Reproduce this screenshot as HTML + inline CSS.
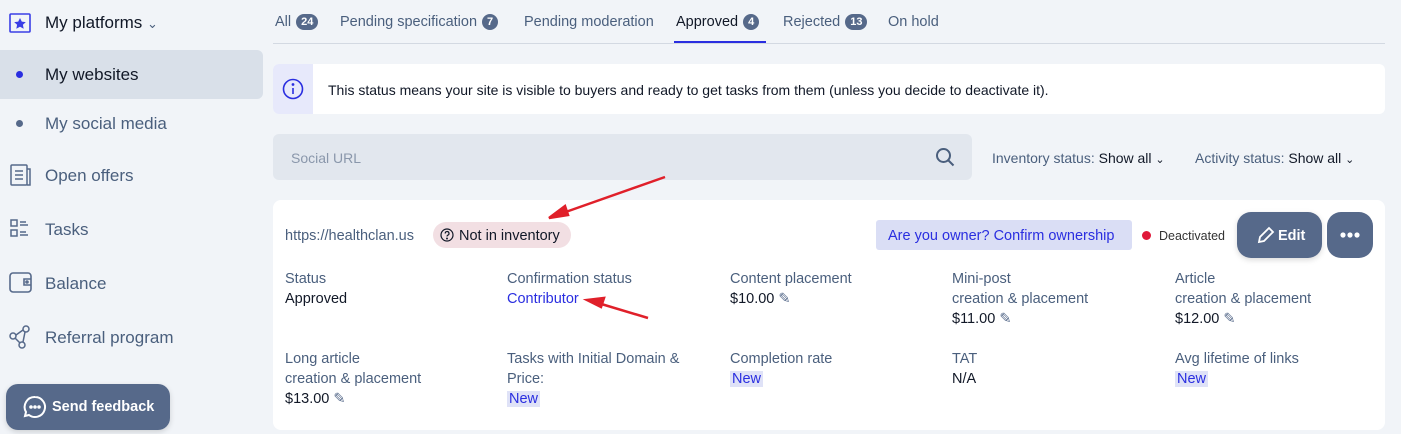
<!DOCTYPE html><html><head><style>
body{margin:0;width:1401px;height:434px;background:#f1f4f8;font-family:"Liberation Sans",sans-serif;position:relative;overflow:hidden;color:#111827}
.a{position:absolute;white-space:nowrap}
.nav{font-size:17px;color:#4a5f7d}
.tab{font-size:14.5px;color:#4a5f7d;top:13px}
.b{display:inline-block;background:#56698a;color:#fff;border-radius:10px;font-size:11px;font-weight:bold;padding:2px 5px;margin-left:5px;vertical-align:1px}
.l{font-size:14.5px;color:#4a5f7d;line-height:20px}
.v{font-size:14.5px;color:#111827;line-height:20px}
.new{background:#dfe2f7;color:#2a2ee0;padding:0 2px}
</style></head><body>
<svg class="a" style="left:9px;top:13px" width="22" height="20" viewBox="0 0 22 20"><rect x="1" y="1" width="20" height="18" rx="1" fill="none" stroke="#3a3ee6" stroke-width="1.6"/><path d="M11 5l1.8 3.6 4 .5-2.9 2.7.8 3.9L11 13.8 7.3 15.7l.8-3.9-2.9-2.7 4-.5z" fill="#3a3ee6"/></svg>
<div class="a" style="left:45px;top:13px;font-size:17px;color:#111827">My platforms <span style="font-size:13px;color:#4a5f7d">&#8964;</span></div>
<div class="a" style="left:0;top:50px;width:263px;height:49px;background:#d9e0e9;border-radius:0 6px 6px 0"></div>
<div class="a" style="left:16px;top:71px;width:7px;height:7px;border-radius:50%;background:#2a2ee0"></div>
<div class="a nav" style="left:45px;top:65px;color:#111827">My websites</div>
<div class="a" style="left:16px;top:120px;width:7px;height:7px;border-radius:50%;background:#56698a"></div>
<div class="a nav" style="left:45px;top:114px">My social media</div>
<svg class="a" style="left:10px;top:164px" width="22" height="22" fill="none" stroke="#56698a" stroke-width="1.5"><rect x="1" y="1" width="16" height="20" rx="1"/><path d="M17 5h3v16h-3M5 7h8M5 11h8M5 15h8"/></svg>
<div class="a nav" style="left:45px;top:166px">Open offers</div>
<svg class="a" style="left:10px;top:219px" width="22" height="20" fill="none" stroke="#56698a" stroke-width="1.5"><rect x="1" y="1" width="6" height="6"/><rect x="1" y="11" width="6" height="6"/><path d="M10 3h6M10 6h8M10 13h6M10 16h8"/></svg>
<div class="a nav" style="left:45px;top:220px">Tasks</div>
<svg class="a" style="left:9px;top:272px" width="24" height="22" fill="none" stroke="#56698a" stroke-width="1.6"><rect x="1" y="1" width="21" height="19" rx="3"/><path d="M22 7h-7v6h7"/><circle cx="18" cy="10" r="1"/></svg>
<div class="a nav" style="left:45px;top:274px">Balance</div>
<svg class="a" style="left:9px;top:325px" width="22" height="24" fill="none" stroke="#56698a" stroke-width="1.5"><circle cx="17" cy="4" r="3"/><circle cx="4" cy="11" r="3"/><circle cx="13" cy="20" r="3"/><path d="M7 10l7-5M6 13l5 5M16 7l-2 10"/></svg>
<div class="a nav" style="left:45px;top:328px">Referral program</div>
<div class="a" style="left:6px;top:384px;width:164px;height:46px;background:#56698a;border-radius:12px;box-shadow:0 2px 6px rgba(0,0,0,.15)"></div>
<svg class="a" style="left:23px;top:395px" width="24" height="24" fill="none" stroke="#fff" stroke-width="2"><path d="M12 2a10 10 0 1 1-6 18l-4 1 1-4A10 10 0 0 1 12 2z"/><circle cx="8" cy="12" r=".8" fill="#fff"/><circle cx="12" cy="12" r=".8" fill="#fff"/><circle cx="16" cy="12" r=".8" fill="#fff"/></svg>
<div class="a" style="left:52px;top:399px;font-size:14.5px;color:#fff;font-weight:bold">Send feedback</div>
<div class="a tab" style="left:275px;top:14px">All<span class="b">24</span></div>
<div class="a tab" style="left:340px;top:14px">Pending specification<span class="b">7</span></div>
<div class="a tab" style="left:524px;top:14px">Pending moderation</div>
<div class="a tab" style="left:676px;top:14px;color:#111827">Approved<span class="b">4</span></div>
<div class="a tab" style="left:783px;top:14px">Rejected<span class="b">13</span></div>
<div class="a tab" style="left:888px;top:14px">On hold</div>
<div class="a" style="left:273px;top:43px;width:1112px;height:1px;background:#d3d9e2"></div>
<div class="a" style="left:674px;top:41px;width:92px;height:2px;background:#2a2ee0"></div>
<div class="a" style="left:273px;top:64px;width:1112px;height:50px;background:#fff;border-radius:6px;overflow:hidden"><div style="width:40px;height:50px;background:#e7e9fb"></div></div>
<svg class="a" style="left:282px;top:78px" width="22" height="22" fill="none" stroke="#2a2ee0" stroke-width="1.6"><circle cx="11" cy="11" r="9.5"/><path d="M11 10v6"/><circle cx="11" cy="6.5" r=".6" fill="#2a2ee0"/></svg>
<div class="a" style="left:328px;top:82px;font-size:14px;color:#111827">This status means your site is visible to buyers and ready to get tasks from them (unless you decide to deactivate it).</div>
<div class="a" style="left:273px;top:134px;width:699px;height:46px;background:#e2e7ee;border-radius:6px"></div>
<div class="a" style="left:291px;top:150px;font-size:14px;color:#8a97ab">Social URL</div>
<svg class="a" style="left:935px;top:147px" width="20" height="20" fill="none" stroke="#4a5f7d" stroke-width="2"><circle cx="8.5" cy="8.5" r="6.5"/><path d="M13.5 13.5l5 5"/></svg>
<div class="a" style="left:992px;top:150px;font-size:14px;color:#4a5f7d">Inventory status: <span style="color:#111827">Show all</span> <span style="font-size:11px;color:#111827">&#8964;</span></div>
<div class="a" style="left:1195px;top:150px;font-size:14px;color:#4a5f7d">Activity status: <span style="color:#111827">Show all</span> <span style="font-size:11px;color:#111827">&#8964;</span></div>
<div class="a" style="left:273px;top:200px;width:1112px;height:230px;background:#fff;border-radius:8px"></div>
<div class="a" style="left:285px;top:228px;font-size:14.5px;color:#4a5f7d">https://healthclan.us</div>
<div class="a" style="left:433px;top:222px;height:26px;width:138px;background:#f2dfe3;border-radius:13px"></div>
<svg class="a" style="left:440px;top:228px" width="14" height="14" fill="none" stroke="#111827" stroke-width="1.2"><circle cx="7" cy="7" r="6"/><path d="M5.2 5.5a1.9 1.9 0 1 1 2.6 1.7c-.6.3-.8.6-.8 1.3"/><circle cx="7" cy="10.5" r=".4" fill="#111827"/></svg>
<div class="a" style="left:459px;top:228px;font-size:14.5px;color:#111827">Not in inventory</div>
<div class="a" style="left:876px;top:220px;width:256px;height:30px;background:#dadef5;border-radius:3px"></div>
<div class="a" style="left:888px;top:228px;font-size:14.5px;color:#2a2ee0">Are you owner? Confirm ownership</div>
<div class="a" style="left:1142px;top:231px;width:9px;height:9px;border-radius:50%;background:#e0193a"></div>
<div class="a" style="left:1159px;top:229px;font-size:12.5px;color:#333">Deactivated</div>
<div class="a" style="left:1237px;top:212px;width:85px;height:46px;background:#56698a;border-radius:14px;box-shadow:0 2px 6px rgba(0,0,0,.15)"></div>
<svg class="a" style="left:1257px;top:226px" width="18" height="18" fill="none" stroke="#fff" stroke-width="1.8"><path d="M12 2l4 4-9 9-5 1 1-5z"/></svg>
<div class="a" style="left:1278px;top:228px;font-size:14.5px;color:#fff;font-weight:bold">Edit</div>
<div class="a" style="left:1327px;top:212px;width:46px;height:46px;background:#56698a;border-radius:14px"></div>
<svg class="a" style="left:1340px;top:230px" width="20" height="10" fill="#fff"><circle cx="3" cy="5" r="2.6"/><circle cx="10" cy="5" r="2.6"/><circle cx="17" cy="5" r="2.6"/></svg>
<div class="a" style="left:285px;top:269px"><div class="l">Status</div><div class="v">Approved</div></div>
<div class="a" style="left:507px;top:269px"><div class="l">Confirmation status</div><div class="v" style="color:#2a2ee0">Contributor</div></div>
<div class="a" style="left:730px;top:269px"><div class="l">Content placement</div><div class="v">$10.00 <span style="color:#56698a">&#9998;</span></div></div>
<div class="a" style="left:952px;top:269px"><div class="l">Mini-post<br>creation &amp; placement</div><div class="v">$11.00 <span style="color:#56698a">&#9998;</span></div></div>
<div class="a" style="left:1175px;top:269px"><div class="l">Article<br>creation &amp; placement</div><div class="v">$12.00 <span style="color:#56698a">&#9998;</span></div></div>
<div class="a" style="left:285px;top:349px"><div class="l">Long article<br>creation &amp; placement</div><div class="v">$13.00 <span style="color:#56698a">&#9998;</span></div></div>
<div class="a" style="left:507px;top:349px"><div class="l">Tasks with Initial Domain &amp;<br>Price:</div><div class="v"><span class="new">New</span></div></div>
<div class="a" style="left:730px;top:349px"><div class="l">Completion rate</div><div class="v"><span class="new">New</span></div></div>
<div class="a" style="left:952px;top:349px"><div class="l">TAT</div><div class="v">N/A</div></div>
<div class="a" style="left:1175px;top:349px"><div class="l">Avg lifetime of links</div><div class="v"><span class="new">New</span></div></div>
<svg class="a" style="left:0;top:0" width="1401" height="434"><g stroke="#e0202a" stroke-width="2.5" fill="#e0202a"><line x1="665" y1="177" x2="560" y2="214"/><path d="M549 218l16-12 3 9z"/><line x1="648" y1="318" x2="598" y2="303"/><path d="M587 300l17-2-3 9z"/></g></svg>
</body></html>
